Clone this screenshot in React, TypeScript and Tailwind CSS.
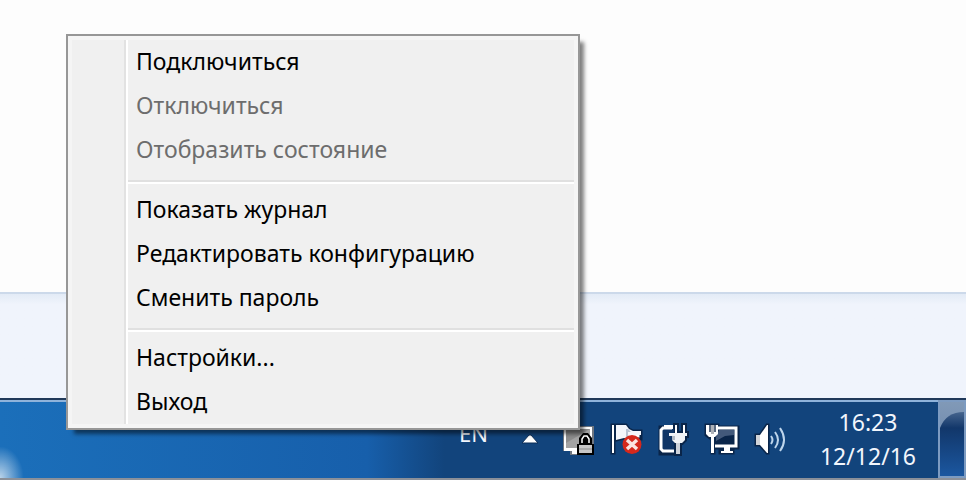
import type { ReactNode } from "react";

type MenuItem = {
    label: string;
    disabled?: boolean;
};

const menuGroups: MenuItem[][] = [
    [
        { label: "Подключиться" },
        { label: "Отключиться", disabled: true },
        { label: "Отобразить состояние", disabled: true },
    ],
    [
        { label: "Показать журнал" },
        { label: "Редактировать конфигурацию" },
        { label: "Сменить пароль" },
    ],
    [{ label: "Настройки..." }, { label: "Выход" }],
];

function TrayMenu() {
    return (
        <div
            role="menu"
            className="absolute bottom-[50px] left-[66px] w-[514px] border-2 border-[#979797] bg-[#f5f5f5] p-1 shadow-[6px_6px_4px_-2px_rgba(0,0,0,0.5)]"
        >
            <div className="flex bg-[#f0f0f0]">
                <div className="w-[54px] shrink-0 border-r-2 border-[#e2e2e2]" />
                <div className="flex-1 border-l-2 border-white">
                    {menuGroups.map((group, idx) => (
                        <div key={idx}>
                            {idx > 0 && (
                                <div className="h-4 pt-2">
                                    <div className="h-0.5 bg-[#e0e0e0]" />
                                    <div className="h-0.5 bg-white" />
                                </div>
                            )}
                            {group.map((item) => (
                                <button
                                    key={item.label}
                                    role="menuitem"
                                    disabled={item.disabled}
                                    className="block h-11 w-full px-2 pb-0.5 text-left text-[23px] leading-[42px] text-black disabled:text-[#6d6d6d]"
                                >
                                    {item.label}
                                </button>
                            ))}
                        </div>
                    ))}
                </div>
            </div>
        </div>
    );
}

function TrayButton({ label, children }: { label: string; children: ReactNode }) {
    return (
        <button aria-label={label} className="size-8 shrink-0">
            <svg viewBox="0 0 32 32" className="size-8 overflow-visible" fill="none">
                {children}
            </svg>
        </button>
    );
}

function Tray() {
    return (
        <div className="flex items-center gap-4">
            <TrayButton label="VPN">
                <path d="M1 3h31v25H18v4H8v-4H1z" fill="#6f7680" />
                <path d="M2 4h28v24H2z" fill="#fff" />
                <path d="M4 6h24v19H4z" fill="#a3a3a3" />
                <path d="M4 6h24L4 20z" fill="#8d8d8d" />
                <path d="M10 28h8v3h-8z" fill="#fff" />
                <path d="M15 21h2v-6l4-5h5l4 5v6h2v11H15z" fill="#000" />
                <path d="M20 20v-4l2-3h3l2 3v4" stroke="#fff" strokeWidth="1.5" />
                <path d="M17 22h13v8H17z" fill="#c6c6c6" />
                <path d="M17 25h13v2H17z" fill="#a9a9a9" />
            </TrayButton>
            <TrayButton label="Центр поддержки">
                <path
                    d="M2 2h2v28H2zM6 2h10l3 4 4 2h8v8H18l-4-1-8 2z"
                    fill="#fff"
                    stroke="#0a2549"
                    strokeWidth="3"
                />
                <path d="M2 2h2v28H2z" fill="#fff" />
                <path d="M6 2h10l3 4 4 2h8v4H19v4l-5-1-8 2z" fill="#f4f6fb" />
                <path d="M16 6h2l3 3h-3v7l-2-1z" fill="#b9c3d3" />
                <circle cx="22" cy="21.5" r="9.5" fill="#d5281c" />
                <path d="m17 17 10 9m0-9-10 9" stroke="#fbe3e0" strokeWidth="3.5" />
            </TrayButton>
            <TrayButton label="Питание">
                <path d="M16 29H4V6h12" stroke="#0a2549" strokeWidth="7" />
                <path
                    d="M17 2h2v8h-2zM25 2h2v8h-2zM12 10h17v3h-2v4l-3 3h-2v11h-4V20h-1l-3-3v-4h-2z"
                    stroke="#0a2549"
                    strokeWidth="4"
                />
                <path d="M4 6h12v22H4z" fill="#0f3566" />
                <path d="M16 28H5l-2-2V7l2-2h9" stroke="#fff" strokeWidth="3" />
                <path d="M6 2h9v4H6z" fill="#fff" />
                <path d="M11 10h18v3h-2v4l-3 3h-7l-3-3v-4h-3z" fill="#f1f3f6" />
                <path d="M17 2h2v8h-2zM25 2h2v8h-2z" fill="#fff" />
                <path d="M18 20h4v11h-4z" fill="#cdd2da" />
                <path d="M14 13h3v4h-3z" fill="#b4bac3" />
            </TrayButton>
            <TrayButton label="Сеть">
                <path
                    d="M12 4h20v21h-7v2h2v3H14v-3h2v-2H8v5H6V15H4l-4-3V2h12v2z"
                    fill="#0a2549"
                    stroke="#0a2549"
                    strokeWidth="3"
                />
                <path d="M12 5h18v18H9" stroke="#fff" strokeWidth="3" />
                <path d="M13 7h15v5l-9 1-9 5v-4z" fill="#43597a" />
                <path d="M18 24h6v4h3v2H15v-2h3z" fill="#fff" />
                <path d="M0 2h12v9l-3 3H3l-3-3z" fill="#fff" />
                <path d="M3 2h2v7H3zM8 2h2v7H8z" fill="#5b6a80" />
                <path d="M5 2h3v9H5z" fill="#aeb2b8" />
                <path d="M5 14h3v16H5z" fill="#fff" />
            </TrayButton>
            <TrayButton label="Громкость">
                <path d="M2 12h4l7-10h1v28h-1L6 22H2z" stroke="#0a2549" strokeWidth="3" />
                <path d="M2 12h4v10H2z" fill="#d0d3d8" />
                <path d="M6 12 13 2h1v28h-1L6 22z" fill="#fff" />
                <path
                    d="M17 13q3 4 0 8M21 9q6 8 0 16M26 5q8 12 0 23"
                    stroke="#bdd5ec"
                    strokeWidth="2"
                />
            </TrayButton>
        </div>
    );
}

function Taskbar() {
    return (
        <footer className="relative flex h-[82px] justify-end border-t-2 border-b-2 border-t-[#20395a] border-b-[#8b9099] bg-linear-to-r from-[#1b6fba] from-0% via-[#175fab] via-38% to-[#12447c] to-46% text-[#f2f6fc]">
            <div className="absolute inset-x-0 top-0 h-0.5 bg-[#8fb3db]" />
            <div className="absolute bottom-0 left-0 h-8 w-6 bg-radial-[at_0%_100%] from-white/70 to-transparent to-70%" />
            <div className="flex items-center">
                <button className="mr-[34px] pb-3 text-[22px] leading-8">EN</button>
                <button aria-label="Отображать скрытые значки" className="mr-6">
                    <svg viewBox="0 0 16 10" className="h-2.5 w-4">
                        <path d="M0 9h16L9 1H7z" fill="#fff" stroke="#0b2c56" />
                    </svg>
                </button>
                <Tray />
                <button className="mr-5 ml-8 w-[100px] text-center text-[23px] leading-[34px]">
                    <time className="block">16:23</time>
                    <time className="block">12/12/16</time>
                </button>
            </div>
            <button
                aria-label="Свернуть все окна"
                className="relative w-7 overflow-hidden border-2 border-[#7d9bc1] bg-linear-to-b from-[#8199b7] to-[#5f7fa8]"
            >
                <svg viewBox="0 0 24 74" preserveAspectRatio="none" className="size-full">
                    <defs>
                        <linearGradient id="peek" x1="0" y1="0" x2="0" y2="1">
                            <stop offset="0" stopColor="#45648d" />
                            <stop offset="0.25" stopColor="#12376a" />
                            <stop offset="1" stopColor="#1b57a0" />
                        </linearGradient>
                    </defs>
                    <path d="M0 74V26Q6 10 24 10v64z" fill="url(#peek)" />
                </svg>
            </button>
        </footer>
    );
}

export default function App() {
    return (
        <main
            className="relative flex min-h-screen flex-col overflow-hidden bg-[#fdfdfd]"
            style={{ fontFamily: '"Noto Sans", "Open Sans", sans-serif' }}
        >
            <div className="flex-1" />
            <div className="h-[106px] border-t-2 border-[#ccd9ea] bg-linear-to-b from-[#e3ebf6] to-[#f0f4fc] to-10%" />
            <Taskbar />
            <TrayMenu />
        </main>
    );
}
